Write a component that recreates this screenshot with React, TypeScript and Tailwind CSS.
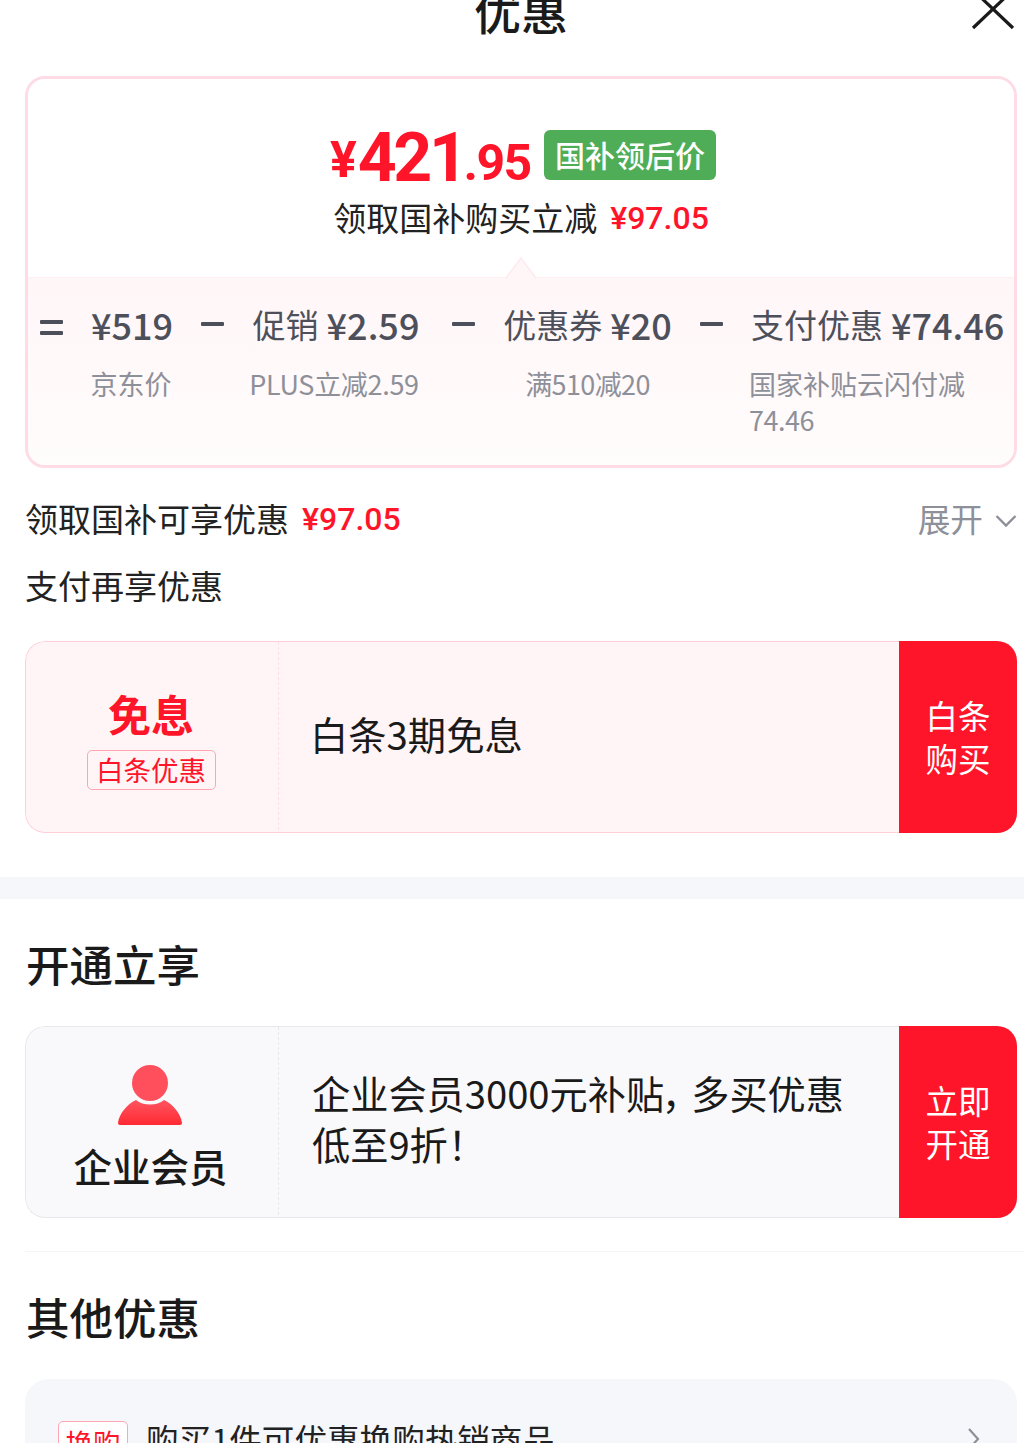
import React from "react";

const font = { fontFamily: '"Noto Sans CJK SC", sans-serif' };
const roboto = { fontFamily: "Roboto, sans-serif" };

function Minus() {
  return <div className="w-[23px] h-[4px] rounded-[1px] bg-[#4d505a] shrink-0" />;
}

function Title({ label, value }: { label?: string; value: string }) {
  return (
    <div className="h-[44px] flex items-center justify-center whitespace-nowrap leading-[44px] text-[#4d505a]">
      {label && <span className="text-[33px] mr-[8px]">{label}</span>}
      <span className="text-[36px] font-medium">{value}</span>
    </div>
  );
}

function Breakdown({ label, value, sub, cls, subCls }: { label?: string; value: string; sub: string; cls: string; subCls: string }) {
  return (
    <div className={cls}>
      <Title label={label} value={value} />
      <div className={subCls}>{sub}</div>
    </div>
  );
}

function OfferCard({ tone, left, text, action }: { tone: "red" | "gray"; left: React.ReactNode; text: React.ReactNode; action: string[] }) {
  const red = tone === "red";
  return (
    <div className="mx-[25px] w-[992px] h-[192px] flex rounded-[20px] overflow-hidden">
      <div className={red ? "flex-1 min-w-0 flex rounded-l-[20px] border-y border-l border-[#ffcfd9] bg-[#fff5f7]" : "flex-1 min-w-0 flex rounded-l-[20px] border-y border-l border-[#e8e8ec] bg-[#f9f9fc]"}>
        <div className={red ? "w-[253px] shrink-0 border-r border-dashed border-[#ffdde4] flex flex-col items-center justify-center mb-[2px] pr-[2px] pt-[2px]" : "w-[253px] shrink-0 border-r border-dashed border-[#e8e8ec] flex flex-col items-center justify-center mb-[2px] pr-[3px] pt-[11px]"}>
          {left}
        </div>
        <div className="flex-1 pl-[33px] pr-[40px] flex items-center text-[#1a1a1a]">{text}</div>
      </div>
      <div className="w-[118px] shrink-0 bg-[#ff1529] text-white flex flex-col items-center justify-center text-[32.5px] leading-[43px] font-normal pb-[2px]">
        {action.map((a) => (<div key={a}>{a}</div>))}
      </div>
    </div>
  );
}

export default function App() {
  return (
    <div className="w-[1024px] h-[1443px] overflow-hidden bg-white relative" style={font}>
      <div className="h-[76px] relative flex justify-center">
        <div className="-mt-[20px] h-[60px] text-[47px] leading-[60px] font-medium text-[#1a1a1a] pl-[18px]">优惠</div>
        <svg className="absolute left-[970px] top-[-4px]" width="46" height="34" viewBox="0 0 46 34" fill="none">
          <path d="M3 32 L43 -6 M3 -6 L43 32" stroke="#1a1a1a" strokeWidth="3.2" />
        </svg>
      </div>

      <div className="relative mx-[25px] w-[992px] h-[392px] rounded-[20px] border-[3px] border-[#ffdbe5] overflow-hidden flex flex-col">
        <div className="h-[198px] bg-white flex flex-col items-center">
          <div className="mt-[47px] flex items-end h-[64px] pl-[4px]">
            <span className="text-[#ff1529] font-bold text-[50px] leading-[64px] mr-[2px] relative top-[2px] tracking-[-1px]" style={roboto}>¥</span>
            <span className="text-[#ff1529] font-bold text-[68px] leading-[64px] tracking-[-3.4px]" style={roboto}>421</span>
            <span className="text-[#ff1529] font-bold text-[50px] leading-[54px] tracking-[-1.6px] ml-[-1px]" style={roboto}>.95</span>
            <span className="ml-[13.5px] mb-[10px] w-[172px] h-[50px] rounded-[6px] bg-[#4fad57] text-white text-[30px] font-medium leading-[48px] text-center">国补领后价</span>
          </div>
          <div className="mt-[5px] flex items-center h-[44px] text-[33px] leading-[44px] text-[#222]">
            <span>领取国补购买立减</span>
            <span className="ml-[13px] text-[#ff1529] text-[32px] font-medium relative top-[1px]" style={roboto}>¥97.05</span>
          </div>
        </div>

        <div className="flex-1 border-t border-[#ffeef3] bg-gradient-to-b from-[#fff6f8] to-[#fffcfc] flex items-start pt-[24px] pl-[12px]">
          <div className="w-[23px] h-[44px] shrink-0 flex flex-col justify-center gap-[7px] items-center pt-[6px]">
            <Minus />
            <Minus />
          </div>
          <Breakdown value="¥519" sub="京东价" cls="w-[138px] shrink-0" subCls="mt-[20px] pr-[2px] text-center text-[27px] leading-[36px] text-[#8e9099]" />
          <div className="h-[44px] flex items-center shrink-0"><Minus /></div>
          <Breakdown label="促销" value="¥2.59" sub="PLUS立减2.59" cls="w-[228px] shrink-0 pr-[4px]" subCls="mt-[20px] pr-[4px] text-center text-[27px] leading-[36px] text-[#8e9099] tracking-[-0.3px]" />
          <div className="h-[44px] flex items-center shrink-0"><Minus /></div>
          <Breakdown label="优惠券" value="¥20" sub="满510减20" cls="w-[225px] shrink-0" subCls="mt-[20px] text-center text-[27px] leading-[36px] text-[#8e9099] tracking-[-0.6px]" />
          <div className="h-[44px] flex items-center shrink-0"><Minus /></div>
          <div className="ml-[28px] w-[240px] shrink-0">
            <div className="flex justify-start"><Title label="支付优惠" value="¥74.46" /></div>
            <div className="mt-[20px] -ml-[2px] text-[27px] leading-[36px] text-[#8e9099] w-[222px]">
              国家补贴云闪付减<span className="tracking-[-0.5px]">74.46</span>
            </div>
          </div>
        </div>

        <svg className="absolute left-[477px] top-[178px]" width="32" height="22" viewBox="0 0 32 22" fill="none">
          <path d="M1 21 L16 1 L31 21" fill="#fff6f8" stroke="#ffe9ef" strokeWidth="1.5" />
        </svg>
      </div>

      <div className="mt-[28px] ml-[25px] mr-[7px] h-[44px] flex items-center justify-between">
        <div className="flex items-center text-[33px] leading-[44px] text-[#222]">
          <span>领取国补可享优惠</span>
          <span className="ml-[13px] text-[#ff1529] text-[32px] font-medium relative top-[1px]" style={roboto}>¥97.05</span>
        </div>
        <div className="flex items-center text-[32.7px] leading-[44px] text-[#8e9099]">
          <span>展开</span>
          <svg className="ml-[12px] mt-[6px]" width="22" height="14" viewBox="0 0 22 14" fill="none">
            <path d="M1.5 2 L11 11.5 L20.5 2" stroke="#8e9099" strokeWidth="2.4" />
          </svg>
        </div>
      </div>

      <div className="mt-[23px] mx-[25px] h-[44px] text-[33px] leading-[44px] text-[#222]">支付再享优惠</div>

      <div className="mt-[34px]">
        <OfferCard
          tone="red"
          left={
            <>
              <div className="text-[43px] leading-[56px] font-bold text-[#ff1529]">免息</div>
              <div className="mt-[9px] w-[129px] h-[40px] rounded-[5px] border border-[#ffa6b5] text-[#ff1529] text-[27.5px] leading-[36px] text-center">白条优惠</div>
            </>
          }
          text={<div className="text-[38.3px] leading-[50px] pb-[6px] -ml-[2px]">白条3期免息</div>}
          action={["白条", "购买"]}
        />
      </div>

      <div className="mt-[44px] h-[22px] bg-[#f6f7fb]" />

      <div className="mt-[36px] ml-[26px] h-[58px] text-[43.5px] leading-[58px] font-medium text-[#1a1a1a]">开通立享</div>

      <div className="mt-[33px]">
        <OfferCard
          tone="gray"
          left={
            <>
              <svg className="mt-[1px] -ml-[2px]" width="66" height="62" viewBox="0 0 66 62" fill="none">
                <defs>
                  <linearGradient id="p" x1="0" y1="0" x2="0" y2="1">
                    <stop offset="0" stopColor="#ff5560" />
                    <stop offset="1" stopColor="#ff2a33" />
                  </linearGradient>
                </defs>
                <circle cx="33" cy="19" r="18" fill="#ff4f5c" />
                <path d="M19 36 C26 42 40 42 47 36 C56 40 64 50 65 59 Q65 61 63 61 L3 61 Q1 61 1 59 C2 50 10 40 19 36 Z" fill="url(#p)" />
              </svg>
              <div className="mt-[14px] text-[38.5px] leading-[50px] font-medium text-[#1a1a1a]">企业会员</div>
            </>
          }
          text={
            <div className="text-[38.2px] leading-[51px] pb-[9px]">
              企业会员3000元补贴<span className="[font-feature-settings:'palt'] mr-[8px]">，</span>多买优惠低至9折！
            </div>
          }
          action={["立即", "开通"]}
        />
      </div>

      <div className="mt-[33px] ml-[25px] h-[1px] bg-[#f5f5f7]" />

      <div className="mt-[36px] ml-[26px] h-[58px] text-[43.5px] leading-[58px] font-medium text-[#1a1a1a]">其他优惠</div>

      <div className="mt-[33px] mx-[25px] w-[992px] h-[200px] rounded-[24px] bg-[#f6f7fb] pt-[42px] pl-[33px] pr-[36px]">
        <div className="flex items-start">
          <div className="w-[70px] h-[40px] rounded-[5px] border border-[#ffa6b5] text-[#ff1529] text-[27.5px] leading-[40px] text-center shrink-0 bg-white">换购</div>
          <div className="ml-[18px] -mt-[4px] flex-1 text-[32.6px] leading-[44px] text-[#222] whitespace-nowrap">购买1件可优惠换购热销商品</div>
          <svg className="mt-[6px]" width="14" height="24" viewBox="0 0 14 24" fill="none">
            <path d="M2 2 L11 12 L2 22" stroke="#8e9099" strokeWidth="2.2" />
          </svg>
        </div>
      </div>
    </div>
  );
}
